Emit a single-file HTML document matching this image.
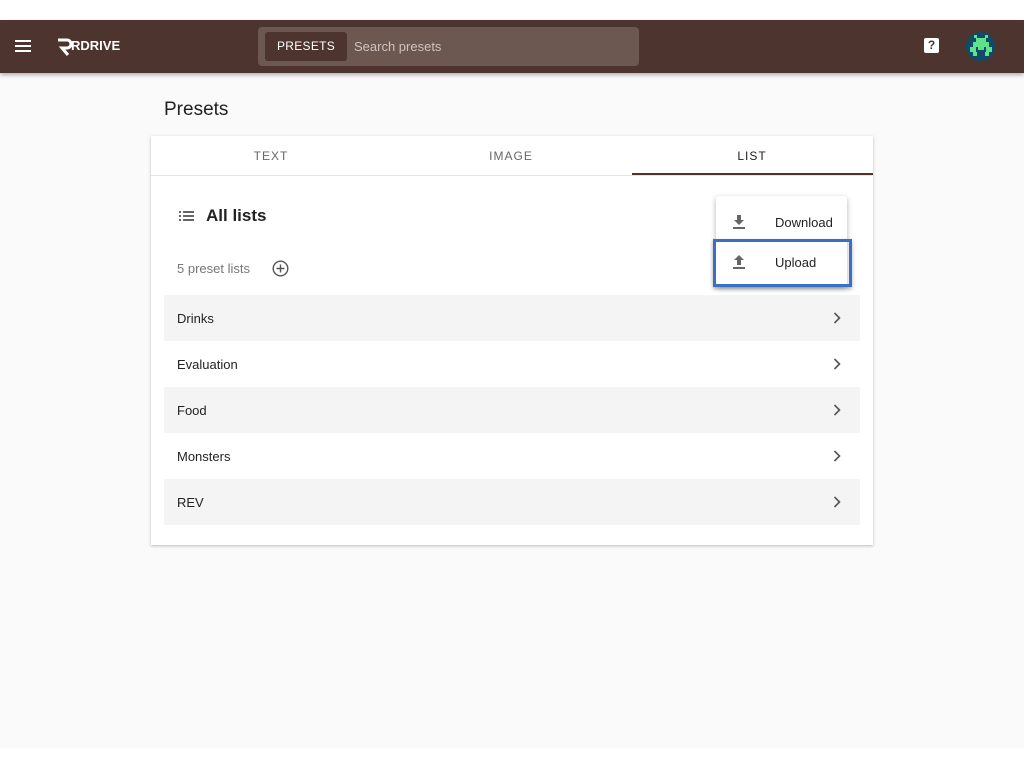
<!DOCTYPE html>
<html><head><style>
*{box-sizing:border-box;margin:0;padding:0}
body{width:1024px;height:768px;background:#fff;font-family:"Liberation Sans",sans-serif;position:relative;overflow:hidden}
.bg{position:absolute;left:0;top:72px;width:1024px;height:676px;background:#fafafa}
.hdr{position:absolute;left:0;top:20px;width:1024px;height:53px;background:#4e342e;box-shadow:0 2px 4px rgba(0,0,0,.3)}
.search{position:absolute;left:258px;top:7px;width:381px;height:39px;background:#6d5751;border-radius:4px}
.pbtn{position:absolute;left:7px;top:5px;width:82px;height:29px;background:#4e342e;border-radius:3px;color:#fff;font-size:12px;text-align:center;line-height:29px;letter-spacing:.3px}
.ph{position:absolute;left:96px;top:12px;color:#cfc3bf;font-size:13px}
.card{position:absolute;left:151px;top:136px;width:722px;height:409px;background:#fff;box-shadow:0 1px 3px rgba(0,0,0,.25)}
.tab{position:absolute;top:0;height:40px;line-height:40px;width:240px;text-align:center;font-size:12px;letter-spacing:1px;color:#666}
.row{position:absolute;left:13px;width:696px;height:46px;line-height:47px;padding-left:13px;font-size:13px;color:#222}
.row.g{background:#f4f4f4}
.row svg{position:absolute;right:19px;top:17px}
.menu{position:absolute;left:716px;top:196px;width:131px;height:90px;background:#fff;box-shadow:0 2px 6px rgba(0,0,0,.3);border-radius:3px}
.mi{position:absolute;left:59px;font-size:13px;color:#222}
</style></head><body>
<div class="bg"></div>
<div class="hdr">
<svg style="position:absolute;left:15px;top:20px" width="16" height="12"><rect y="0" width="16" height="2" fill="#fff"/><rect y="5" width="16" height="2" fill="#fff"/><rect y="10" width="16" height="2" fill="#fff"/></svg>
<svg style="position:absolute;left:56px;top:18px" width="16" height="18"><path d="M2 2h9a4 4 0 0 1 0 8H6l6 7" stroke="#fff" stroke-width="3" fill="none"/></svg>
<div style="position:absolute;left:71px;top:18px;color:#fff;font-size:13px;font-weight:bold">RDRIVE</div>
<div class="search"><div class="pbtn">PRESETS</div><div class="ph">Search presets</div></div>
<div style="position:absolute;left:924px;top:18px;width:15px;height:15px;background:#fff;border-radius:2px;color:#4e342e;font-size:12px;font-weight:bold;text-align:center;line-height:15px">?</div>
<div style="position:absolute;left:966px;top:12px;width:29px;height:29px;border-radius:50%;background:#0f4a66"></div>
<svg style="position:absolute;left:970px;top:15px" width="22" height="23" fill="#5fe08a"><rect x="4" y="0" width="3" height="3"/><rect x="15" y="0" width="3" height="3"/><rect x="6" y="3" width="10" height="4"/><rect x="3" y="7" width="16" height="5"/><rect x="0" y="12" width="6" height="5"/><rect x="16" y="12" width="6" height="5"/><rect x="8" y="12" width="6" height="3"/><rect x="3" y="17" width="4" height="4"/><rect x="15" y="17" width="4" height="4"/></svg>
</div>
<div style="position:absolute;left:164px;top:99px;font-size:19px;color:#222">Presets</div>
<div class="card">
<div class="tab" style="left:0">TEXT</div>
<div class="tab" style="left:240px">IMAGE</div>
<div class="tab" style="left:481px;color:#222">LIST</div>
<div style="position:absolute;left:481px;top:37px;width:241px;height:2px;background:#4e342e"></div>
<div style="position:absolute;left:0;top:39px;width:722px;height:1px;background:#e6e6e6"></div>
<svg style="position:absolute;left:28px;top:75px" width="15" height="10" fill="#666"><rect x="0" y="0" width="2" height="2"/><rect x="0" y="4" width="2" height="2"/><rect x="0" y="8" width="2" height="2"/><rect x="4" y="0" width="11" height="2"/><rect x="4" y="4" width="11" height="2"/><rect x="4" y="8" width="11" height="2"/></svg>
<div style="position:absolute;left:55px;top:70px;font-size:17px;color:#222;font-weight:bold;-webkit-text-stroke:0">All lists</div>
<div style="position:absolute;left:26px;top:125px;font-size:13px;color:#777">5 preset lists</div>
<svg style="position:absolute;left:121px;top:124px" width="17" height="17"><circle cx="8.5" cy="8.5" r="7.3" stroke="#555" stroke-width="1.4" fill="none"/><path d="M8.5 4.5v8M4.5 8.5h8" stroke="#555" stroke-width="1.4"/></svg>
<div class="row g" style="top:159px">Drinks<svg width="8" height="12"><path d="M1.5 1l5 5-5 5" stroke="#555" stroke-width="1.6" fill="none"/></svg></div>
<div class="row" style="top:205px">Evaluation<svg width="8" height="12"><path d="M1.5 1l5 5-5 5" stroke="#555" stroke-width="1.6" fill="none"/></svg></div>
<div class="row g" style="top:251px">Food<svg width="8" height="12"><path d="M1.5 1l5 5-5 5" stroke="#555" stroke-width="1.6" fill="none"/></svg></div>
<div class="row" style="top:297px">Monsters<svg width="8" height="12"><path d="M1.5 1l5 5-5 5" stroke="#555" stroke-width="1.6" fill="none"/></svg></div>
<div class="row g" style="top:343px">REV<svg width="8" height="12"><path d="M1.5 1l5 5-5 5" stroke="#555" stroke-width="1.6" fill="none"/></svg></div>
</div>
<div class="menu">
<svg style="position:absolute;left:16px;top:19px" width="14" height="14" fill="#666"><path d="M5 0h4v5h3l-5 5-5-5h3z"/><rect x="1" y="12" width="12" height="2"/></svg>
<div class="mi" style="top:19px">Download</div>
<svg style="position:absolute;left:16px;top:59px" width="14" height="14" fill="#666"><path d="M5 10h4V5h3L7 0 2 5h3z"/><rect x="1" y="12" width="12" height="2"/></svg>
<div class="mi" style="top:59px">Upload</div>
</div>
<div style="position:absolute;left:713px;top:239px;width:139px;height:48px;border:3px solid #3b6fc4;box-shadow:0 2px 4px rgba(0,0,0,.3)"></div>
</body></html>
